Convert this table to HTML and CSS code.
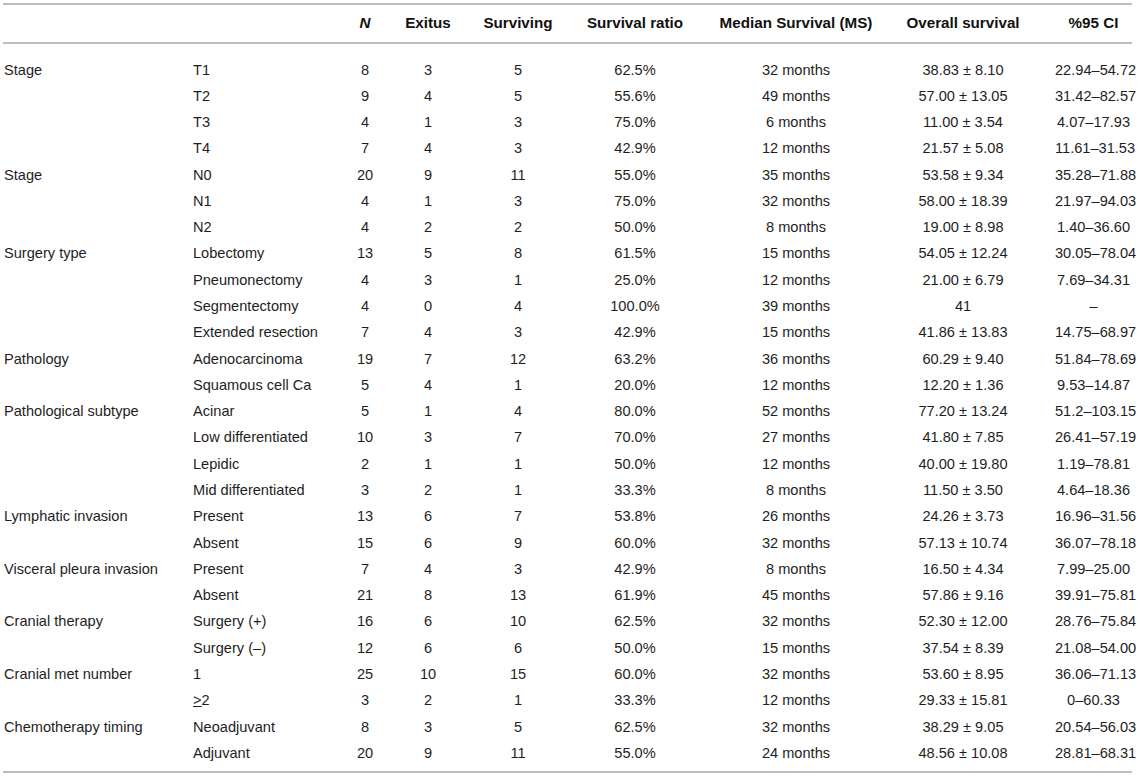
FILE: index.html
```html
<!DOCTYPE html>
<html lang="en">
<head>
<meta charset="utf-8">
<title>Survival table</title>
<link rel="stylesheet" href="styles.css">
</head>
<body>
<table class="tbl">
  <colgroup>
    <col class="c1"><col class="c2"><col class="c3"><col class="c4"><col class="c5"><col class="c6"><col class="c7"><col class="c8"><col class="c9">
  </colgroup>
  <thead>
    <tr>
      <th class="l"></th><th class="l"></th><th><i>N</i></th><th>Exitus</th><th>Surviving</th><th>Survival ratio</th><th>Median Survival (MS)</th><th>Overall survival</th><th class="ci">%95 CI</th>
    </tr>
  </thead>
  <tbody>
    <tr class="first"><td class="l g">Stage</td><td class="l s">T1</td><td>8</td><td>3</td><td>5</td><td>62.5%</td><td>32 months</td><td>38.83 ± 8.10</td><td class="ci">22.94–54.72</td></tr>
    <tr><td class="l g"></td><td class="l s">T2</td><td>9</td><td>4</td><td>5</td><td>55.6%</td><td>49 months</td><td>57.00 ± 13.05</td><td class="ci">31.42–82.57</td></tr>
    <tr><td class="l g"></td><td class="l s">T3</td><td>4</td><td>1</td><td>3</td><td>75.0%</td><td>6 months</td><td>11.00 ± 3.54</td><td class="ci">4.07–17.93</td></tr>
    <tr><td class="l g"></td><td class="l s">T4</td><td>7</td><td>4</td><td>3</td><td>42.9%</td><td>12 months</td><td>21.57 ± 5.08</td><td class="ci">11.61–31.53</td></tr>
    <tr><td class="l g">Stage</td><td class="l s">N0</td><td>20</td><td>9</td><td>11</td><td>55.0%</td><td>35 months</td><td>53.58 ± 9.34</td><td class="ci">35.28–71.88</td></tr>
    <tr><td class="l g"></td><td class="l s">N1</td><td>4</td><td>1</td><td>3</td><td>75.0%</td><td>32 months</td><td>58.00 ± 18.39</td><td class="ci">21.97–94.03</td></tr>
    <tr><td class="l g"></td><td class="l s">N2</td><td>4</td><td>2</td><td>2</td><td>50.0%</td><td>8 months</td><td>19.00 ± 8.98</td><td class="ci">1.40–36.60</td></tr>
    <tr><td class="l g">Surgery type</td><td class="l s">Lobectomy</td><td>13</td><td>5</td><td>8</td><td>61.5%</td><td>15 months</td><td>54.05 ± 12.24</td><td class="ci">30.05–78.04</td></tr>
    <tr><td class="l g"></td><td class="l s">Pneumonectomy</td><td>4</td><td>3</td><td>1</td><td>25.0%</td><td>12 months</td><td>21.00 ± 6.79</td><td class="ci">7.69–34.31</td></tr>
    <tr><td class="l g"></td><td class="l s">Segmentectomy</td><td>4</td><td>0</td><td>4</td><td>100.0%</td><td>39 months</td><td>41</td><td class="ci">–</td></tr>
    <tr><td class="l g"></td><td class="l s">Extended resection</td><td>7</td><td>4</td><td>3</td><td>42.9%</td><td>15 months</td><td>41.86 ± 13.83</td><td class="ci">14.75–68.97</td></tr>
    <tr><td class="l g">Pathology</td><td class="l s">Adenocarcinoma</td><td>19</td><td>7</td><td>12</td><td>63.2%</td><td>36 months</td><td>60.29 ± 9.40</td><td class="ci">51.84–78.69</td></tr>
    <tr><td class="l g"></td><td class="l s">Squamous cell Ca</td><td>5</td><td>4</td><td>1</td><td>20.0%</td><td>12 months</td><td>12.20 ± 1.36</td><td class="ci">9.53–14.87</td></tr>
    <tr><td class="l g">Pathological subtype</td><td class="l s">Acinar</td><td>5</td><td>1</td><td>4</td><td>80.0%</td><td>52 months</td><td>77.20 ± 13.24</td><td class="ci">51.2–103.15</td></tr>
    <tr><td class="l g"></td><td class="l s">Low differentiated</td><td>10</td><td>3</td><td>7</td><td>70.0%</td><td>27 months</td><td>41.80 ± 7.85</td><td class="ci">26.41–57.19</td></tr>
    <tr><td class="l g"></td><td class="l s">Lepidic</td><td>2</td><td>1</td><td>1</td><td>50.0%</td><td>12 months</td><td>40.00 ± 19.80</td><td class="ci">1.19–78.81</td></tr>
    <tr><td class="l g"></td><td class="l s">Mid differentiated</td><td>3</td><td>2</td><td>1</td><td>33.3%</td><td>8 months</td><td>11.50 ± 3.50</td><td class="ci">4.64–18.36</td></tr>
    <tr><td class="l g">Lymphatic invasion</td><td class="l s">Present</td><td>13</td><td>6</td><td>7</td><td>53.8%</td><td>26 months</td><td>24.26 ± 3.73</td><td class="ci">16.96–31.56</td></tr>
    <tr><td class="l g"></td><td class="l s">Absent</td><td>15</td><td>6</td><td>9</td><td>60.0%</td><td>32 months</td><td>57.13 ± 10.74</td><td class="ci">36.07–78.18</td></tr>
    <tr><td class="l g">Visceral pleura invasion</td><td class="l s">Present</td><td>7</td><td>4</td><td>3</td><td>42.9%</td><td>8 months</td><td>16.50 ± 4.34</td><td class="ci">7.99–25.00</td></tr>
    <tr><td class="l g"></td><td class="l s">Absent</td><td>21</td><td>8</td><td>13</td><td>61.9%</td><td>45 months</td><td>57.86 ± 9.16</td><td class="ci">39.91–75.81</td></tr>
    <tr><td class="l g">Cranial therapy</td><td class="l s">Surgery (+)</td><td>16</td><td>6</td><td>10</td><td>62.5%</td><td>32 months</td><td>52.30 ± 12.00</td><td class="ci">28.76–75.84</td></tr>
    <tr><td class="l g"></td><td class="l s">Surgery (–)</td><td>12</td><td>6</td><td>6</td><td>50.0%</td><td>15 months</td><td>37.54 ± 8.39</td><td class="ci">21.08–54.00</td></tr>
    <tr><td class="l g">Cranial met number</td><td class="l s">1</td><td>25</td><td>10</td><td>15</td><td>60.0%</td><td>32 months</td><td>53.60 ± 8.95</td><td class="ci">36.06–71.13</td></tr>
    <tr><td class="l g"></td><td class="l s"><span class="ul">&gt;</span>2</td><td>3</td><td>2</td><td>1</td><td>33.3%</td><td>12 months</td><td>29.33 ± 15.81</td><td class="ci">0–60.33</td></tr>
    <tr><td class="l g">Chemotherapy timing</td><td class="l s">Neoadjuvant</td><td>8</td><td>3</td><td>5</td><td>62.5%</td><td>32 months</td><td>38.29 ± 9.05</td><td class="ci">20.54–56.03</td></tr>
    <tr class="last"><td class="l g"></td><td class="l s">Adjuvant</td><td>20</td><td>9</td><td>11</td><td>55.0%</td><td>24 months</td><td>48.56 ± 10.08</td><td class="ci">28.81–68.31</td></tr>
  </tbody>
</table>
</body>
</html>
```

FILE: styles.css
```css
html, body {
  margin: 0;
  padding: 0;
  background: #ffffff;
}

body {
  padding: 3px 0 0 3px;
  font-family: "Liberation Sans", Arial, Helvetica, sans-serif;
  color: #1e1e1e;
}

.tbl {
  border-collapse: collapse;
  table-layout: fixed;
  width: 1129px;
  border-top: 2px solid #bdbdbd;
  border-bottom: 2px solid #bdbdbd;
}

.c1 { width: 190px; }
.c2 { width: 142px; }
.c3 { width: 60px; }
.c4 { width: 66px; }
.c5 { width: 114px; }
.c6 { width: 120px; }
.c7 { width: 202px; }
.c8 { width: 132px; }
.c9 { width: 103px; }

.tbl th {
  font-size: 15.2px;
  font-weight: bold;
  color: #111;
  text-align: center;
  white-space: nowrap;
  padding: 0 0 2px 0;
  line-height: 35px;
  border-bottom: 2px solid #bdbdbd;
}

.tbl th i {
  font-style: italic;
}

.tbl td {
  font-size: 14.6px;
  text-align: center;
  white-space: nowrap;
  padding: 4.65px 0 4.65px 0;
  line-height: 17px;
}

.tbl .l {
  text-align: left;
}

.tbl .g {
  padding-left: 1px;
}

.tbl .s {
  padding-left: 0;
}

.tbl .ci {
  padding-left: 26px;
}

.tbl tr.first td {
  padding-top: 17.5px;
}

.tbl tr.last td {
  padding-bottom: 9.6px;
}

.ul {
  text-decoration: underline;
  text-underline-offset: 1px;
}
```
